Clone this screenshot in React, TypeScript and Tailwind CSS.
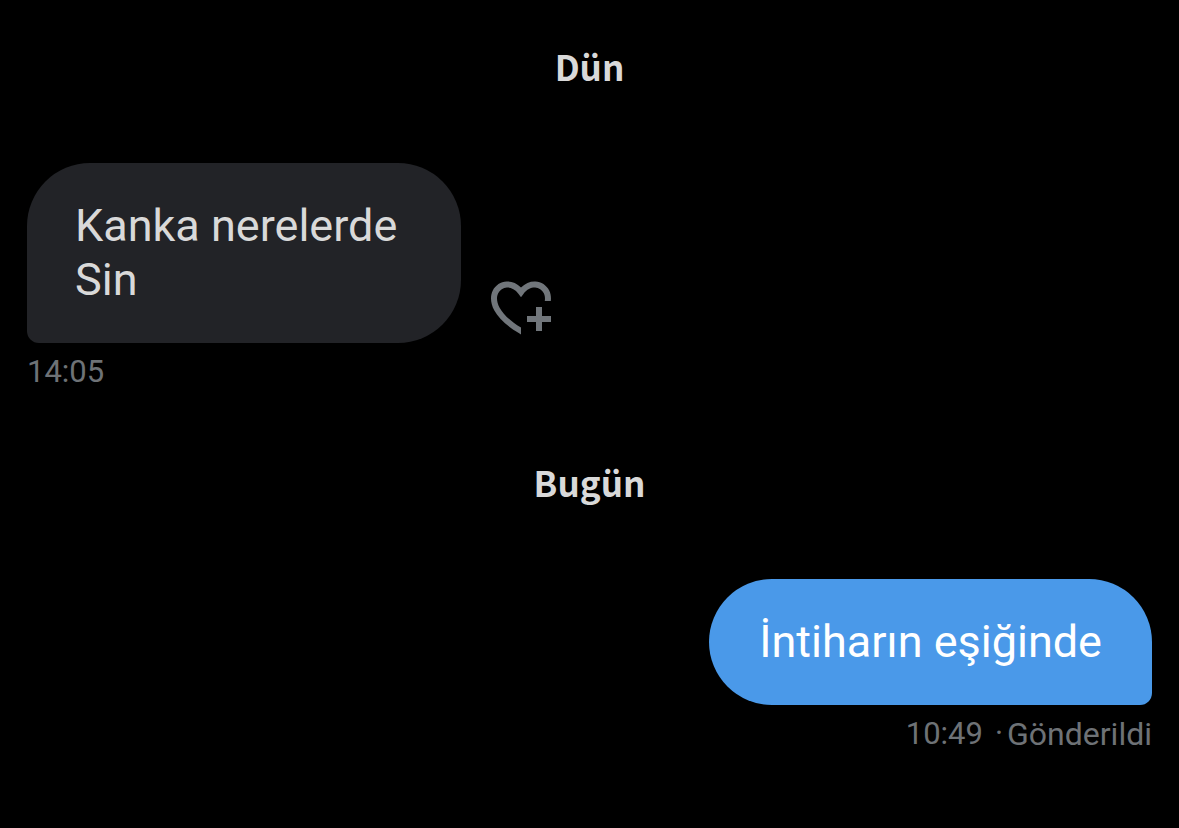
type Message = {
  id: number;
  lines: string[];
  time: string;
  status?: string;
  mine: boolean;
};

const DAYS: { title: string; messages: Message[] }[] = [
  {
    title: "Dün",
    messages: [
      { id: 1, lines: ["Kanka nerelerde", "Sin"], time: "14:05", mine: false },
    ],
  },
  {
    title: "Bugün",
    messages: [
      {
        id: 2,
        lines: ["İntiharın eşiğinde"],
        time: "10:49",
        status: "Gönderildi",
        mine: true,
      },
    ],
  },
];

function HeartPlus() {
  return (
    <svg viewBox="0 0 24 24" className="size-18 fill-current" aria-hidden="true">
      <path d="M17 12v3h-2.998v2h3v3h2v-3h3v-2h-3.001v-3H17zm-5 6.839c-3.871-2.34-6.053-4.639-7.127-6.609-1.112-2.04-1.031-3.7-.479-4.82.561-1.13 1.667-1.84 2.91-1.91 1.222-.06 2.68.51 3.892 2.16l.806 1.09.805-1.09c1.211-1.65 2.668-2.22 3.89-2.16 1.242.07 2.347.78 2.908 1.91.334.677.49 1.554.321 2.59h2.011c.153-1.283-.039-2.469-.539-3.48-.887-1.79-2.647-2.91-4.601-3.01-1.65-.09-3.367.56-4.796 2.01-1.43-1.45-3.147-2.1-4.798-2.01-1.954.1-3.714 1.22-4.601 3.01-.896 1.81-.846 4.17.514 6.67 1.353 2.48 4.003 5.12 8.382 7.67l.502.299v-2.32z" />
    </svg>
  );
}

function Received({ message }: { message: Message }) {
  return (
    <div className="flex flex-col items-start">
      <div className="flex items-end gap-6">
        <div className="rounded-[63px] rounded-bl-xl bg-[#222327] py-9 pl-12 pr-16 text-[45px] leading-[54px] text-[#d9d9d9]">
          {message.lines.map((line) => (
            <p key={line}>{line}</p>
          ))}
        </div>
        <button type="button" aria-label="Tepki ekle" className="text-[#71767b]">
          <HeartPlus />
        </button>
      </div>
      <p className="mt-[9px] text-[31px] leading-10 text-[#6e7276]">{message.time}</p>
    </div>
  );
}

function Sent({ message }: { message: Message }) {
  return (
    <div className="flex flex-col items-end">
      <div className="rounded-[63px] rounded-br-xl bg-[#4a99e9] px-[50px] py-9 text-[45px] leading-[54px] text-white">
        {message.lines.map((line) => (
          <p key={line}>{line}</p>
        ))}
      </div>
      <p className="mt-[9px] flex text-[31px] leading-10 text-[#6e7276]">
        <span>{message.time}</span>
        <span className="pl-3 pr-1">·</span>
        <span className="text-[32px]">{message.status}</span>
      </p>
    </div>
  );
}

export default function App() {
  return (
    <main className="min-h-screen bg-black px-[27px] pt-10 font-[Roboto,sans-serif]">
      {DAYS.map((day) => (
        <section key={day.title} className="mb-16">
          <h2 className="mb-[72px] text-center font-['Noto_Sans_CJK_JP',sans-serif] text-[35px] leading-[51px] font-bold text-[#d9d9d9]">
            {day.title}
          </h2>
          {day.messages.map((m) =>
            m.mine ? <Sent key={m.id} message={m} /> : <Received key={m.id} message={m} />
          )}
        </section>
      ))}
    </main>
  );
}
